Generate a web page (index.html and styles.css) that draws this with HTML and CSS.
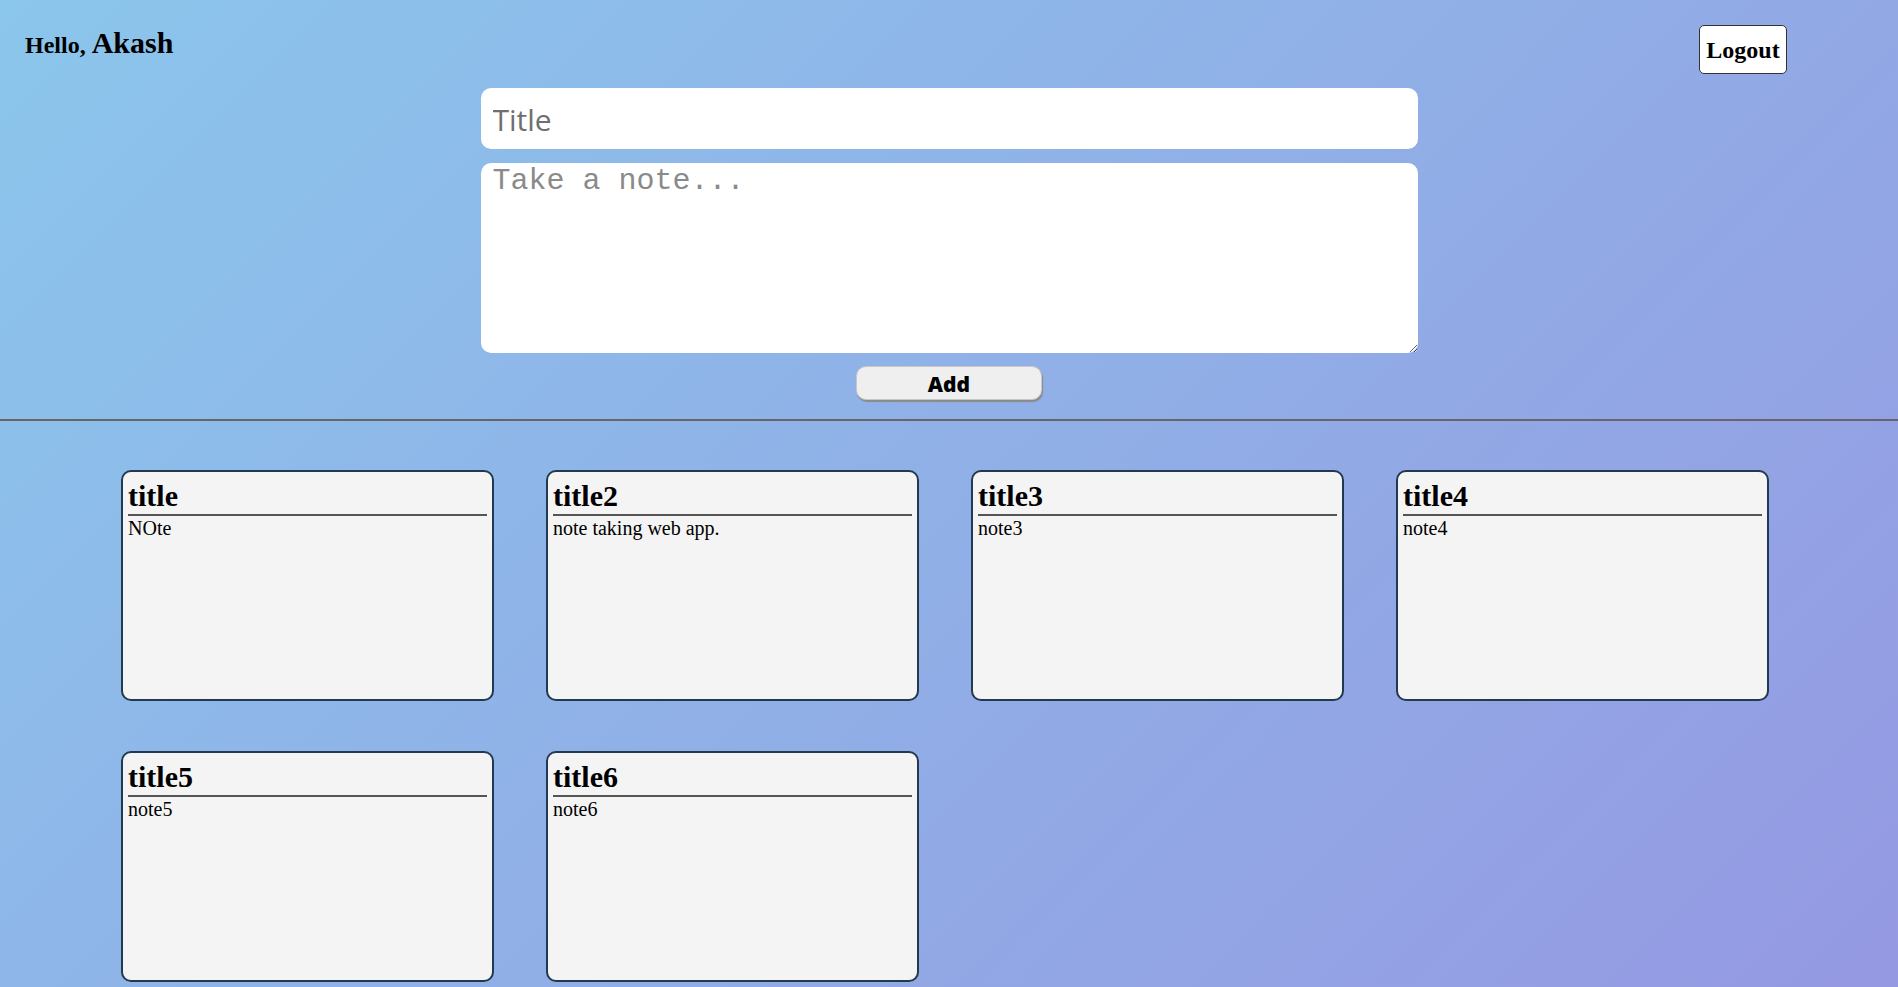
FILE: index.html
```html
<!DOCTYPE html>
<html lang="en">
<head>
<meta charset="utf-8">
<title>Notes</title>
<link rel="stylesheet" href="styles.css">
</head>
<body>
<header class="top">
  <h2 class="greet">Hello, <span class="name">Akash</span></h2>
  <button class="logout">Logout</button>
</header>
<form class="composer">
  <input class="title-input" type="text" placeholder="Title">
  <textarea class="note-input" placeholder="Take a note..."></textarea>
  <button class="add" type="button">Add</button>
</form>
<hr class="divider">
<main class="notes">
  <div class="card"><h2 class="card-title">title</h2><p class="card-body">NOte</p></div>
  <div class="card"><h2 class="card-title">title2</h2><p class="card-body">note taking web app.</p></div>
  <div class="card"><h2 class="card-title">title3</h2><p class="card-body">note3</p></div>
  <div class="card"><h2 class="card-title">title4</h2><p class="card-body">note4</p></div>
  <div class="card"><h2 class="card-title">title5</h2><p class="card-body">note5</p></div>
  <div class="card"><h2 class="card-title">title6</h2><p class="card-body">note6</p></div>
</main>
</body>
</html>
```
FILE: styles.css
```css
html, body {
  margin: 0;
  padding: 0;
}
body {
  min-height: 987px;
  background: linear-gradient(135deg, #8bc6ec 0%, #9599e2 100%);
  background-attachment: fixed;
  font-family: "Liberation Serif", "Times New Roman", serif;
  color: #000;
}
.top {
  display: flex;
  justify-content: space-between;
  align-items: flex-start;
  padding: 25px 111px 0 25px;
  height: 49px;
}
.greet {
  margin: 1px 0 0 0;
  font-size: 24px;
  font-weight: bold;
}
.name {
  font-size: 30px;
}
.logout {
  font-family: "Liberation Serif", "Times New Roman", serif;
  font-weight: bold;
  font-size: 24px;
  line-height: 27px;
  padding: 11px 6px 9px;
  width: 88px;
  height: 49px;
  background: #fff;
  color: #000;
  border: 1px solid #333;
  border-radius: 5px;
}
.composer {
  display: flex;
  flex-direction: column;
  align-items: center;
  margin: 14px 0 0 0;
}
.title-input {
  box-sizing: border-box;
  width: 937px;
  height: 61px;
  border: none;
  border-radius: 10px;
  padding: 1px 12px 0;
  font-family: "Open Sans", "Liberation Sans", sans-serif;
  font-size: 30px;
  background: #fff;
  outline: none;
}
.title-input::placeholder {
  color: #6f6f6f;
}
.note-input {
  box-sizing: border-box;
  width: 937px;
  height: 190px;
  margin-top: 14px;
  border: none;
  border-radius: 10px;
  padding: 1px 12px 0;
  font-family: "Liberation Mono", "Courier New", monospace;
  font-size: 30px;
  background: #fff;
  outline: none;
  resize: both;
}
.note-input::placeholder {
  color: #8a8a8a;
}
.add {
  box-sizing: border-box;
  width: 186px;
  height: 34px;
  margin-top: 13px;
  background: #efefef;
  border: 1px solid #c8c8c8;
  border-radius: 10px;
  box-shadow: 1px 2px 1px #8a8a8a;
  font-family: "Open Sans", "Liberation Sans", sans-serif;
  font-weight: 800;
  font-size: 21px;
  line-height: 1;
  color: #000;
  padding: 2px 0 0;
}
.divider {
  margin: 19px 0 0 0;
  border: none;
  border-top: 2px solid #666;
  height: 0;
}
.notes {
  display: grid;
  grid-template-columns: repeat(4, 373px);
  column-gap: 52px;
  row-gap: 50px;
  padding: 49px 0 0 121px;
}
.card {
  box-sizing: border-box;
  height: 231px;
  background: #f4f4f4;
  border: 2px solid #223a4f;
  border-radius: 10px;
  padding: 5px;
}
.card-title {
  margin: 0;
  font-size: 30px;
  line-height: 37px;
  font-weight: bold;
  border-bottom: 2px solid #555;
}
.card-body {
  margin: 0;
  font-size: 20px;
  line-height: 24px;
}
```
